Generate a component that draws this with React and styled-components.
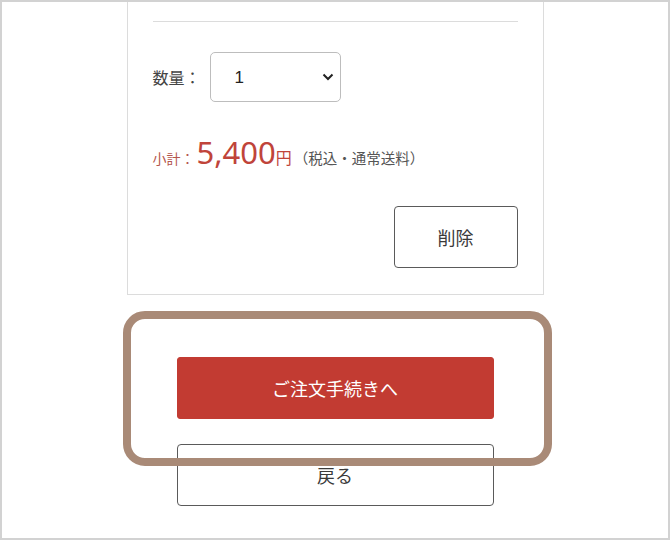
import React from "react";
import styled, { createGlobalStyle } from "styled-components";

const colors = {
  frame: "#d2d2d2",
  cardLine: "#dcdcdc",
  text: "#3a3a3a",
  muted: "#555555",
  red: "#c23b32",
  priceRed: "#c0443a",
  highlight: "#a98a77",
};

const GlobalStyle = createGlobalStyle`
  html, body {
    margin: 0;
    padding: 0;
    background: #ffffff;
  }
  body {
    font-family: "Noto Sans", "Noto Sans CJK JP", sans-serif;
    color: ${colors.text};
  }
`;

const Frame = styled.div`
  position: relative;
  width: 670px;
  height: 540px;
  box-sizing: border-box;
  border: 2px solid ${colors.frame};
  overflow: hidden;
  background: #fff;
`;

const Card = styled.section`
  width: 417px;
  box-sizing: border-box;
  margin: 0 auto;
  border: 1px solid ${colors.cardLine};
  border-top: none;
  padding: 19px 25px 26px;
  display: flex;
  flex-direction: column;
`;

const Divider = styled.hr`
  margin: 0;
  border: none;
  border-top: 1px solid ${colors.cardLine};
`;

const QtyRow = styled.div`
  margin-top: 30px;
  display: flex;
  align-items: center;
  gap: 9px;
`;

const Label = styled.span`
  font-family: "Noto Sans CJK JP", sans-serif;
  font-size: 16px;
  font-weight: 400;
  color: #444;
`;

const Select = styled.select`
  width: 131px;
  height: 50px;
  box-sizing: border-box;
  border: 1px solid #bdbdbd;
  border-radius: 5px;
  background: #fff;
  padding: 0 0 0 24px;
  font-family: "Liberation Sans", sans-serif;
  font-size: 17px;
  color: #222;
  appearance: none;
  background-image: url("data:image/svg+xml;utf8,<svg xmlns='http://www.w3.org/2000/svg' width='12' height='8' viewBox='0 0 12 8'><path d='M1.5 1.5 L6 6 L10.5 1.5' fill='none' stroke='%23222' stroke-width='2'/></svg>");
  background-repeat: no-repeat;
  background-position: right 6px center;
`;

const Subtotal = styled.div`
  margin-top: 32px;
  display: flex;
  align-items: baseline;
  color: ${colors.priceRed};
  line-height: 36px;
`;

const SubLabel = styled.span`
  font-family: "Noto Sans CJK JP", sans-serif;
  font-size: 14px;
  color: #b5564d;
`;

const Price = styled.span`
  font-family: "Noto Sans", sans-serif;
  font-size: 31px;
  font-weight: 400;
  margin-left: 2px;
`;

const Yen = styled.span`
  font-family: "Noto Sans CJK JP", sans-serif;
  font-size: 16px;
`;

const Note = styled.span`
  font-family: "Noto Sans CJK JP", sans-serif;
  font-size: 14.5px;
  color: ${colors.muted};
  margin-left: 2px;
`;

const ActionRow = styled.div`
  margin-top: 30px;
  display: flex;
  justify-content: flex-end;
`;

const Button = styled.button`
  box-sizing: border-box;
  width: ${(p) => p.$width}px;
  height: 62px;
  border-radius: ${(p) => (p.$primary ? 3 : 4)}px;
  border: 1px solid ${(p) => (p.$primary ? colors.red : "#5a5a5a")};
  background: ${(p) => (p.$primary ? colors.red : "#fff")};
  color: ${(p) => (p.$primary ? "#fff" : colors.text)};
  font-family: "Noto Sans CJK JP", sans-serif;
  font-size: 18px;
  font-weight: 400;
  cursor: pointer;
`;

const Actions = styled.div`
  margin-top: 62px;
  display: flex;
  flex-direction: column;
  align-items: center;
  gap: 25px;
`;

const Highlight = styled.div`
  position: absolute;
  left: 121px;
  top: 309px;
  width: 429px;
  height: 155px;
  box-sizing: border-box;
  border: 8px solid ${colors.highlight};
  border-radius: 22px;
  pointer-events: none;
`;

export default function App() {
  return (
    <>
      <GlobalStyle />
      <Frame>
        <Card>
          <Divider />
          <QtyRow>
            <Label>数量：</Label>
            <Select defaultValue="1">
              <option value="1">1</option>
              <option value="2">2</option>
              <option value="3">3</option>
            </Select>
          </QtyRow>
          <Subtotal>
            <SubLabel>小計：</SubLabel>
            <Price>5,400</Price>
            <Yen>円</Yen>
            <Note>（税込・通常送料）</Note>
          </Subtotal>
          <ActionRow>
            <Button $width={124}>削除</Button>
          </ActionRow>
        </Card>
        <Actions>
          <Button $primary $width={317}>ご注文手続きへ</Button>
          <Button $width={317}>戻る</Button>
        </Actions>
        <Highlight />
      </Frame>
    </>
  );
}
